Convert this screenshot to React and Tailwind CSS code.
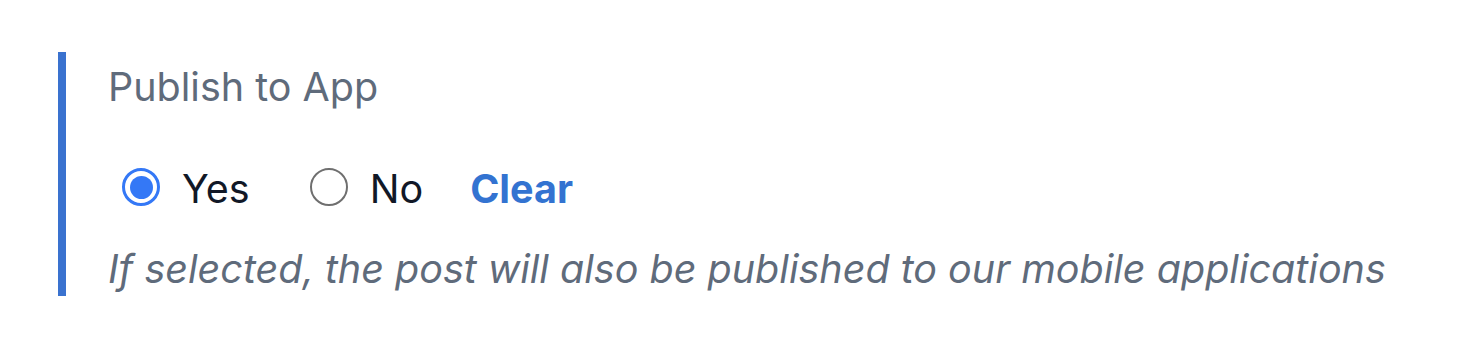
import React, { useState } from "react";

function Radio({ checked, label, onClick }) {
  return (
    <button type="button" onClick={onClick} className="flex items-center gap-[22px]">
      {checked ? (
        <span className="mb-[4px] w-[38px] h-[38px] rounded-full border-[3px] border-[#3478f6] bg-white flex items-center justify-center">
          <span className="w-[23px] h-[23px] rounded-full bg-[#3478f6]" />
        </span>
      ) : (
        <span className="mb-[4px] w-[38px] h-[38px] rounded-full border-[2.5px] border-[#6f6f6f] bg-white" />
      )}
      <span className="text-[39.5px] leading-[48px] text-[#111827]">{label}</span>
    </button>
  );
}

export default function App() {
  const [value, setValue] = useState("yes");

  return (
    <div className="w-[1480px] h-[357px] bg-white pt-[52px] pl-[58px] font-['Inter',sans-serif]">
      <div className="border-l-[8px] border-[#3a72cf] pl-[42px] h-[244px]">
        <div className="text-[39.5px] leading-[48px] pt-[11px] text-[#5f6b7b]">Publish to App</div>
        <div className="flex items-center mt-[54px] pl-[14px]">
          <Radio checked={value === "yes"} label="Yes" onClick={() => setValue("yes")} />
          <div className="ml-[60px]">
            <Radio checked={value === "no"} label="No" onClick={() => setValue("no")} />
          </div>
          <button
            type="button"
            onClick={() => setValue("")}
            className="ml-[47px] text-[39.5px] leading-[48px] font-bold text-[#3373d1]"
          >
            Clear
          </button>
        </div>
        <p className="mt-[32px] text-[39.5px] leading-[48px] italic text-[#5f6b7b]">
          If selected, the post will also be published to our mobile applications
        </p>
      </div>
    </div>
  );
}
